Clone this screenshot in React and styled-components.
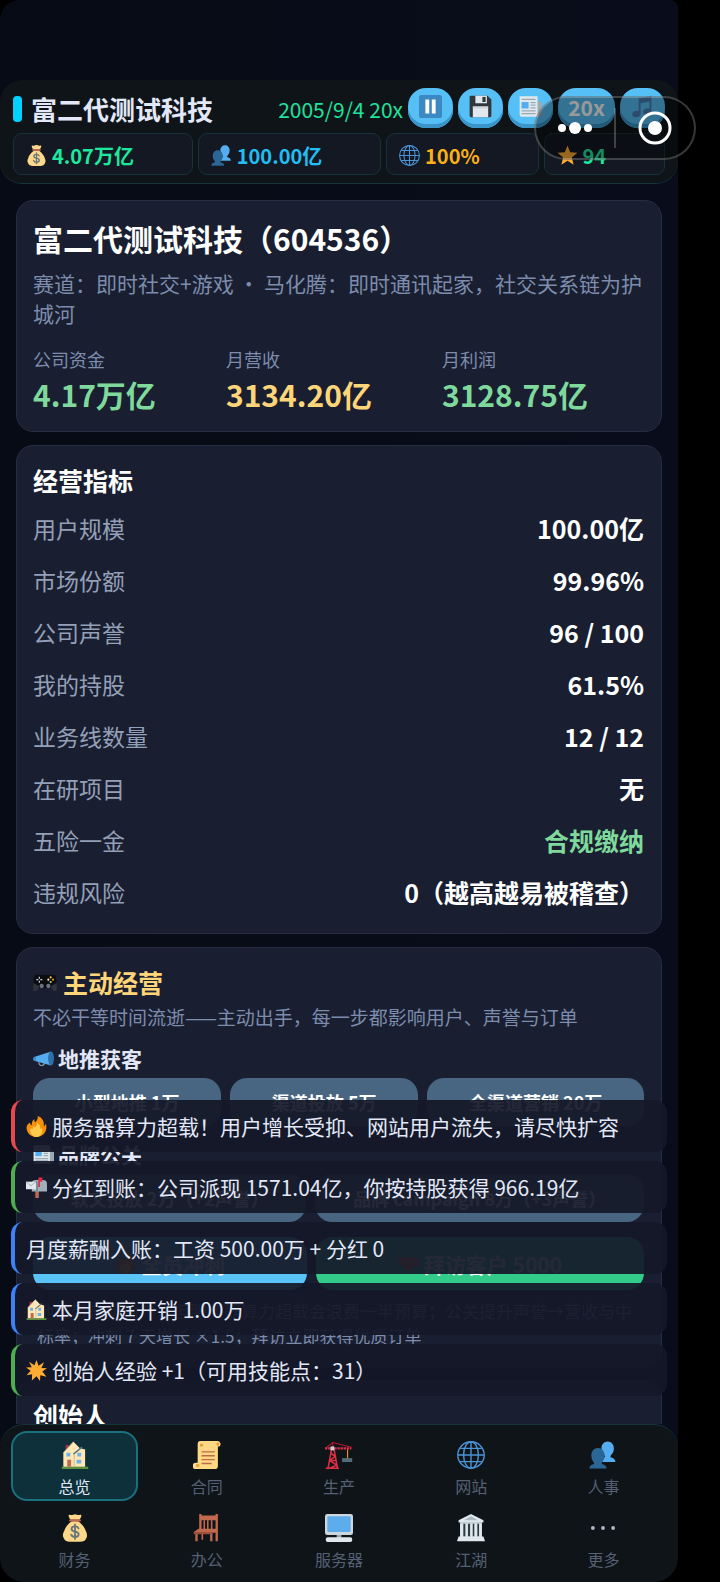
import React, { useState } from "react"
import styled, { createGlobalStyle, ThemeProvider } from "styled-components"

const theme = {
  white: "#ffffff",
  text: "#e2e8f8",
  muted: "#7d8cad",
  label: "#949fb8",
  green: "#7fd99c",
  yellow: "#ffd57a",
  card: "#191f30",
  cardBorder: "#262d40",
  bar: "#0f1418",
  teal: "#17323b",
}

const GlobalStyle = createGlobalStyle`
  * {
    box-sizing: border-box;
  }
  body {
    margin: 0;
    background: #000;
    font-family: "Noto Sans CJK SC", "Noto Sans", sans-serif;
  }
  button {
    font-family: inherit;
    border: none;
    padding: 0;
    cursor: pointer;
  }
  h1, h2, h3, p, dl, dd, ul {
    margin: 0;
    padding: 0;
  }
`

/* ---------- icons ---------- */

const drawings = {
  money: (
    <>
      <path fill="#fdd888" d="M31.9 21.7C30.5 17 25 11 21.800 9.400h-7.600C10.500 11 5.500 17 4.100 21.700 2.700 24 1.500 28 3.500 31c1.500 4 4.500 4.800 8 4.800h13c4 0 7-1 8.200-4.800 1.500-3.500.5-7-.8-9.300z" />
      <path fill="#fdd888" d="M12.500 7.500C11 5.500 9.500 3 9.800 1.500c.5-1.300 2.500-.2 3.800-.2C15 1.300 16.300.200 18 .200s3 1.100 4.400 1.100c1.300 0 3.300-1.100 3.800.200.3 1.500-1.200 4-2.700 6z" />
      <rect x="10.500" y="6.800" width="15" height="3" rx="1.500" fill="#bf6952" />
      <path fill="none" stroke="#67757f" strokeWidth="2.300" strokeLinecap="round" d="M22.500 18.500c-.8-1.700-2.500-2.500-4.500-2.500-2.500 0-4.500 1.300-4.500 3.300 0 4.700 9.200 2 9.200 6.700 0 2.200-2.200 3.500-4.700 3.500-2.300 0-4.200-1-4.900-3M18 13.500v18.500" />
    </>
  ),
  people: (
    <>
      <path fill="#55acee" d="M34 27c0-3.500-2.500-5-5.500-5.800-1-.3-1.300-2 0-3.200C30.500 16 32 13 32 9.500 32 4 28.500.500 24 .500S16 4 16 9.500c0 3.500 1.500 6.500 3.500 8.500 1.300 1.200 1 2.900 0 3.200C18 21.700 17 23 17 27z" />
      <path fill="#2a6797" d="M22.500 35.500c0-3-2-4.700-5.200-5.500-1.300-.3-1.300-1.700-.3-2.800C19 25 20 22 20 18.500 20 13 16.500 9 11.500 9S3 13 3 18.500C3 22 4 25 6 27.200c1 1.100 1 2.500-.3 2.800C2.500 30.800.500 32.500.500 35.500z" />
    </>
  ),
  globe: (
    <g fill="none" stroke="#4b93d6" strokeWidth="1.800">
      <circle cx="18" cy="18" r="17" />
      <ellipse cx="18" cy="18" rx="9.500" ry="17" />
      <path d="M18 1v34M1 18h34M4 9.500h28M4 26.500h28" />
    </g>
  ),
  star: (
    <path fill="#ffac33" d="M18 1l4.600 11.500L35 13.300l-9.600 8L28.500 34 18 27 7.500 34l3.100-12.700-9.600-8 12.400-.8z" />
  ),
  pause: (
    <>
      <rect width="36" height="36" rx="4" fill="#3b88c3" />
      <path fill="#fff" d="M10 7h6v22h-6zM20 7h6v22h-6z" />
    </>
  ),
  save: (
    <>
      <path fill="#31373d" d="M3 1h26l6 6v25a3 3 0 0 1-3 3H4a3 3 0 0 1-3-3V3a2 2 0 0 1 2-2z" />
      <path fill="#e1e8ed" d="M10 1h18v12H10zM6 18h24v17H6z" />
      <path fill="#31373d" d="M21 3h5v8h-5z" />
      <path fill="#ccd6dd" d="M6 18h24v3H6z" />
    </>
  ),
  news: (
    <>
      <path fill="#99aab5" d="M28 10h4.500a3.500 3.500 0 0 1 3.500 3.500V30a3 3 0 0 1-3 3H8z" />
      <path fill="#e1e8ed" d="M1 2h28v28a3 3 0 0 0 3 4H4a3 3 0 0 1-3-3z" />
      <path stroke="#99aab5" strokeWidth="2" d="M4 7h22M18 12h8M18 16h8M18 20h8M4 25h22M4 29h22" />
      <path fill="#55acee" d="M4 11h11v10H4z" />
    </>
  ),
  music: (
    <path fill="#4c7fb5" d="M32 1L12 5v20.300c-1-.5-2.300-.8-4-.5C4 25.500 1.500 28 2 31s3.500 4.500 7.500 3.700C13.500 34 15 32 15 29V13l14-3v11.300c-1-.5-2.300-.8-4-.5-4 .7-6.500 3.200-6 6.200s3.500 4.500 7.500 3.700C30.500 31 32 29 32 26z" />
  ),
  gamepad: (
    <>
      <path fill="#0b0d11" d="M5 7h26c3 0 4 5 4.500 12L31 27H5L.500 19C1 12 2 7 5 7z" />
      <path fill="#30353b" d="M.500 19L10 25l-5 6c-2 1-4 .5-4.500-1zM35.500 19L26 25l5 6c2 1 4 .5 4.500-1z" />
      <circle cx="13" cy="24" r="3.200" fill="#66757f" />
      <circle cx="23" cy="24" r="3.200" fill="#66757f" />
      <path stroke="#ccd6dd" strokeWidth="1.800" d="M9.500 10v3M9.500 16v3M5 14.500h3M11 14.500h3" />
      <circle cx="26.500" cy="11" r="1.600" fill="#ffcc4d" />
      <circle cx="26.500" cy="18" r="1.600" fill="#a6d388" />
      <circle cx="23" cy="14.500" r="1.600" fill="#ffe8b6" />
      <circle cx="30" cy="14.500" r="1.600" fill="#f4900c" />
    </>
  ),
  horn: (
    <>
      <path fill="none" stroke="#8899a6" strokeWidth="2" d="M10 23c0 4 1.500 7 5 7s4.500-2 5-5" />
      <path fill="#55acee" d="M31 6L2 15.500C0 17 0 20.500 2 22l29 8z" />
      <ellipse cx="31" cy="18" rx="5" ry="12" fill="#2d6fa8" />
      <path fill="#3b88c3" d="M2 15.500l3-1v8.300L2 22c-2-1.500-2-5 0-6.500z" />
    </>
  ),
  fire: (
    <>
      <path fill="#f4900c" d="M35 19c0-2-.4-4-1-6-.6 2.500-2 4-3.500 4.800C32 10 28 2.500 20 0c1 4-1 7-4 10.500-1.500-1-2-3-1.500-5.500-4 2.500-5 7-4.500 11C8 15.500 7 13.500 7.200 11 3 13 1 16.500 1 20c0 9 7.600 16 17 16s17-7 17-17z" />
      <path fill="#ffcc4d" d="M28 24c0-1.500-.3-2.800-1-4-.5 1.500-1.500 2-2.500 2.300.8-4-1.500-8.300-5.500-10.300.5 3-1 5-3 7.500-1 0-2-1-2-2.500-2.500 1.500-2.800 3.500-2.500 6-1.500-.3-2.500-1.500-2.500-2.500C7.500 21.500 7 23 7 25c0 6 5 11 11 11s10-6 10-12z" />
    </>
  ),
  mailbox: (
    <>
      <path fill="#bf6952" d="M16 22h6v14h-6z" />
      <path fill="#9fb0bb" d="M16 5h13a7 7 0 0 1 7 7v13H10V11a6 6 0 0 1 6-6z" />
      <path fill="#66757f" d="M20 25V12a6 6 0 0 0-8-6c5 0 6 3 6 7v12z" />
      <path fill="#e1e8ed" d="M0 8h17v13H0z" />
      <path fill="none" stroke="#99aab5" strokeWidth="1.500" d="M0 8l8.500 7L17 8" />
      <path fill="#dd2e44" d="M22 1h6v7h-4v9h-3V3z" />
    </>
  ),
  house: (
    <>
      <path fill="#5c913b" d="M1 33h34v3H1z" />
      <path fill="#a0304f" d="M6 5h4v8H6z" />
      <path fill="#ffe8b6" d="M3 15L16 1l8 8 7 2v22H3z" />
      <path fill="none" stroke="#66757f" strokeWidth="2" d="M16 17l11-9" />
      <path fill="none" stroke="#c9b48c" strokeWidth="1.200" d="M17 17v16M3 15L16 1" />
      <path fill="#6fb3e4" d="M7 15h5v5H7zM21 15h5v5h-5zM20 24h6v5h-6z" />
      <path fill="#c1694f" d="M8 24h5v9H8z" />
    </>
  ),
  shine: (
    <path fill="#ffac33" d="M18 0l3.500 10L31 4l-4.500 9.500L36 14l-8 5.500 7 9-10.500-2.500L24 36l-6-8-8 7 .5-10.500L1 26l7-7.500L0 13l10-.5L5 3l9.500 6z" />
  ),
  scroll: (
    <>
      <path fill="#ffd983" d="M9 0h23a4 4 0 0 1 2 7h-2v25a4 4 0 0 1-4 4H4a4 4 0 0 1-1-8h3V4c0-2 1-4 3-4z" />
      <path fill="#e39f3d" d="M9 4h4v3H9zM4 30h4v3H4z" />
      <path stroke="#c1694f" strokeWidth="1.800" d="M11 14h17M11 19h17M11 24h17M11 29h13" />
      <circle cx="32" cy="4" r="2" fill="#e39f3d" />
    </>
  ),
  crane: (
    <>
      <path fill="none" stroke="#dd2e44" strokeWidth="2" d="M4 35l4.500-25h3L16 35M7 15l6 5-7 5 9 6-9 4M6 25h9M1 35h17" />
      <path fill="none" stroke="#be1931" strokeWidth="1.300" d="M10 1v8M10 2l24 6M10 2L1 9" />
      <path fill="none" stroke="#dd2e44" strokeWidth="3" strokeDasharray="3 1" d="M0 9.500h34" />
      <path fill="#ccd6dd" d="M7 7h5v5H7z" />
      <path stroke="#f4900c" strokeWidth="1.500" d="M29 11v12" />
      <path fill="#546b78" d="M22 22h13v5H22z" />
    </>
  ),
  chair: (
    <>
      <path fill="#c1694f" d="M8 0h3v20H8zM29 0h3v35h-3zM8 2h24v6H8zM1 23l6-4h25v5H1zM3 24h3v11H3zM22 24h3v11h-3zM11 24h2v9h-2z" />
      <path stroke="#c1694f" strokeWidth="2" d="M14.500 8v12M19 8v12M24 8v12" />
      <path fill="#a0503a" d="M1 23h24v3H1z" />
    </>
  ),
  computer: (
    <>
      <path fill="#99aab5" d="M15 26h6v5h-6z" />
      <rect y="0" width="36" height="27" rx="3" fill="#ccd6dd" />
      <rect x="3" y="3" width="30" height="20" rx="1" fill="#5dadec" />
      <rect x="1" y="30" width="34" height="6" rx="2.500" fill="#e1e8ed" />
    </>
  ),
  temple: (
    <>
      <path fill="#9fb0bb" d="M4 10h28v20H4z" />
      <path fill="#2f3b44" d="M8 13h3v16H8zM14 13h3v16h-3zM20 13h2.500v16H20zM26 13h2.500v16H26z" />
      <path fill="#e1e8ed" d="M18 0l16 8v3H2V8zM4 12h4v17H4zM11 12h3v17h-3zM17 12h3v17h-3zM22.500 12h3.500v17h-3.500zM28.500 12h3.500v17h-3.500zM2 29h32l2 6H0z" />
      <path fill="#aab8c2" d="M18 3l9 5H9z" />
    </>
  ),
  more: (
    <g fill="#a9b4c4">
      <circle cx="5" cy="18" r="2.500" />
      <circle cx="18" cy="18" r="2.500" />
      <circle cx="31" cy="18" r="2.500" />
    </g>
  ),
  hands: (
    <path fill="#ef6a45" d="M0 9l8-2 8 2 5-2 7 1 8 2v12l-8 2-9 7c-3 0-9-5-12-9l-7-3z" />
  ),
}

const Svg = styled.svg`
  display: block;
  flex: none;
  width: ${({ $size }) => $size}px;
  height: ${({ $size }) => $size}px;
`

const Icon = ({ name, size = 21 }) => (
  <Svg $size={size} viewBox="0 0 36 36" aria-hidden="true">
    {drawings[name]}
  </Svg>
)

/* ---------- page frame ---------- */

const Page = styled.div`
  position: relative;
  display: flex;
  height: 100vh;
  padding-right: 42px;
  background: #000;
`
const Shell = styled.div`
  display: flex;
  flex-direction: column;
  flex: 1;
  min-width: 0;
  padding-top: 80px;
  overflow: hidden;
  border-radius: 20px 8px 24px 24px;
  background: linear-gradient(90deg, #070b15 0%, #090c1a 100%);
`
const Header = styled.header`
  display: flex;
  flex-direction: column;
  gap: 5px;
  padding: 8px 13px;
  border-radius: 22px;
  border-bottom: 1px solid ${({ theme }) => theme.teal};
  background: ${({ theme }) => theme.bar};
`
const TitleRow = styled.div`
  display: flex;
  align-items: center;
  gap: 5px;
  height: 40px;
`
const Brand = styled.h1`
  display: flex;
  align-items: center;
  gap: 9px;
  flex: 1;
  padding-top: 2px;
  font-size: 26px;
  line-height: 40px;
  font-weight: 700;
  white-space: nowrap;
  color: ${({ theme }) => theme.text};
  &::before {
    content: "";
    width: 9px;
    height: 26px;
    border-radius: 4px;
    background: #00d2ff;
  }
`
const Clock = styled.time`
  padding-top: 2px;
  font-size: 21px;
  white-space: nowrap;
  color: #1fe39c;
`
const PillButton = styled.button`
  display: flex;
  align-items: center;
  justify-content: center;
  width: ${({ $wide }) => ($wide ? 57 : 45)}px;
  height: 40px;
  padding-bottom: 3px;
  border-radius: 18px;
  font-size: 21px;
  font-weight: 700;
  color: #fff;
  background: #55bff6;
  box-shadow: inset 0 -4px 0 #3a95c9;
`
const Stats = styled.div`
  display: flex;
  gap: 5px;
`
const Stat = styled.div`
  display: flex;
  align-items: center;
  gap: 5px;
  flex: 1 1 auto;
  height: 42px;
  padding: 2px 12px 0;
  border: 1px solid ${({ theme }) => theme.teal};
  border-radius: 9px;
  background: #131822;
  font-size: 20px;
  font-weight: 700;
  color: ${({ $color }) => $color};
`

const Capsule = styled.div`
  position: absolute;
  top: 96px;
  right: 24px;
  display: flex;
  align-items: center;
  width: 162px;
  height: 64px;
  border: 2px solid rgba(255, 255, 255, 0.22);
  border-radius: 32px;
  background: rgba(0, 0, 0, 0.4);
`
const CapsuleButton = styled.button`
  display: flex;
  align-items: center;
  justify-content: center;
  flex: 1;
  height: 40px;
  background: none;
  & + & {
    border-left: 2px solid rgba(255, 255, 255, 0.22);
  }
`

/* ---------- cards ---------- */

const Content = styled.div`
  position: relative;
  flex: 1;
  min-height: 0;
`
const Main = styled.main`
  display: flex;
  flex-direction: column;
  gap: 13px;
  height: 100%;
  padding: 16px 16px 0;
  overflow: hidden;
`
const Card = styled.section`
  flex: none;
  padding: 17px 17px 15px 16px;
  border: 1px solid ${({ theme }) => theme.cardBorder};
  border-radius: 17px;
  background: ${({ theme }) => theme.card};
`
const CompanyName = styled.h2`
  font-size: 30px;
  line-height: 40px;
  font-weight: 700;
  color: ${({ theme }) => theme.white};
`
const CompanyInfo = styled.p`
  margin: 10px 0 18px;
  font-size: 21px;
  line-height: 30px;
  color: ${({ theme }) => theme.muted};
`
const Figures = styled.dl`
  display: grid;
  grid-template-columns: auto auto auto;
  column-gap: 14px;
`
const FigureLabel = styled.dt`
  font-size: 18px;
  line-height: 26px;
  color: ${({ theme }) => theme.muted};
`
const FigureValue = styled.dd`
  font-size: 30px;
  line-height: 44px;
  font-weight: 700;
  color: ${({ $color }) => $color};
`
const CardTitle = styled.h2`
  display: flex;
  align-items: center;
  gap: 6px;
  margin-bottom: 5px;
  font-size: 25px;
  line-height: 34px;
  font-weight: 700;
  color: ${({ theme, $accent }) => ($accent ? theme.yellow : theme.white)};
`
const MetricRow = styled.div`
  display: flex;
  justify-content: space-between;
  padding: 8px 0;
  line-height: 36px;
`
const MetricLabel = styled.dt`
  font-size: 23px;
  color: ${({ theme }) => theme.label};
`
const MetricValue = styled.dd`
  font-size: 25px;
  font-weight: 700;
  color: ${({ theme, $good }) => ($good ? theme.green : theme.white)};
`
const Intro = styled.p`
  font-size: 19px;
  line-height: 26px;
  color: ${({ theme }) => theme.muted};
`
const GroupTitle = styled.h3`
  display: flex;
  align-items: center;
  gap: 4px;
  margin: 13px 0 5px;
  font-size: 21px;
  line-height: 30px;
  font-weight: 700;
  color: ${({ theme }) => theme.text};
`
const Actions = styled.div`
  display: flex;
  gap: 9px;
  margin-top: ${({ $spaced }) => ($spaced ? 15 : 0)}px;
`
const ActionButton = styled.button`
  display: flex;
  align-items: center;
  justify-content: center;
  gap: 5px;
  flex: 1 1 auto;
  height: ${({ $large }) => ($large ? 53 : 48)}px;
  border-radius: 17px;
  font-size: ${({ $large }) => ($large ? 21 : 18)}px;
  font-weight: 700;
  white-space: nowrap;
  color: #fff;
  background: ${({ $green }) => ($green ? "#33cb8a" : "#5ac3f7")};
  &:disabled {
    background: #486681;
  }
`
const Hint = styled.p`
  padding: 8px 4px 3px;
  font-size: 17px;
  line-height: 25px;
  color: ${({ theme }) => theme.muted};
`

/* ---------- toasts ---------- */

const ToastStack = styled.ul`
  position: absolute;
  left: 11px;
  right: 11px;
  bottom: 28px;
  display: flex;
  flex-direction: column;
  gap: 9px;
  list-style: none;
`
const Toast = styled.li`
  display: flex;
  align-items: center;
  gap: 5px;
  height: 52px;
  padding: 0 11px;
  border-left: 4px solid ${({ $color }) => $color};
  border-radius: 12px;
  background: rgba(20, 24, 40, 0.93);
  font-size: 21px;
  white-space: nowrap;
  color: ${({ theme }) => theme.text};
`

/* ---------- tab bar ---------- */

const TabBar = styled.nav`
  display: grid;
  grid-template-columns: repeat(5, 1fr);
  gap: 3px 5px;
  padding: 6px 11px 8px;
  border-top: 1px solid ${({ theme }) => theme.teal};
  border-radius: 24px;
  background: ${({ theme }) => theme.bar};
`
const Tab = styled.button`
  display: flex;
  flex-direction: column;
  align-items: center;
  gap: 5px;
  height: 70px;
  padding-top: 8px;
  border: 2px solid ${({ $active }) => ($active ? "#1b707d" : "transparent")};
  border-radius: 16px;
  background: ${({ $active }) => ($active ? "#0e303b" : "transparent")};
  font-size: 16px;
  line-height: 24px;
  color: ${({ $active }) => ($active ? "#dfe9f5" : "#566074")};
`

const metrics = [
  ["用户规模", "100.00亿"],
  ["市场份额", "99.96%"],
  ["公司声誉", "96 / 100"],
  ["我的持股", "61.5%"],
  ["业务线数量", "12 / 12"],
  ["在研项目", "无"],
  ["五险一金", "合规缴纳", true],
  ["违规风险", "0（越高越易被稽查）"],
]

const stats = [
  { icon: "money", value: "4.07万亿", color: "#1ee8a0" },
  { icon: "people", value: "100.00亿", color: "#22bdf2" },
  { icon: "globe", value: "100%", color: "#fbb116" },
  { icon: "star", value: "94", color: "#1ee8a0" },
]

const toasts = [
  { icon: "fire", color: "#e5484d", text: "服务器算力超载！用户增长受抑、网站用户流失，请尽快扩容" },
  { icon: "mailbox", color: "#4caf50", text: "分红到账：公司派现 1571.04亿，你按持股获得 966.19亿" },
  { color: "#3b82f6", text: "月度薪酬入账：工资 500.00万 + 分红 0" },
  { icon: "house", color: "#3b82f6", text: "本月家庭开销 1.00万" },
  { icon: "shine", color: "#4caf50", text: "创始人经验 +1（可用技能点：31）" },
]

const tabs = [
  ["house", "总览"],
  ["scroll", "合同"],
  ["crane", "生产"],
  ["globe", "网站"],
  ["people", "人事"],
  ["money", "财务"],
  ["chair", "办公"],
  ["computer", "服务器"],
  ["temple", "江湖"],
  ["more", "更多"],
]

const App = () => {
  const [active, setActive] = useState("总览")

  return (
    <ThemeProvider theme={theme}>
      <GlobalStyle />
      <Page>
        <Shell>
          <Header>
            <TitleRow>
              <Brand>富二代测试科技</Brand>
              <Clock>2005/9/4 20x</Clock>
              <PillButton aria-label="暂停"><Icon name="pause" size={23} /></PillButton>
              <PillButton aria-label="保存"><Icon name="save" size={23} /></PillButton>
              <PillButton aria-label="新闻"><Icon name="news" size={23} /></PillButton>
              <PillButton $wide>20x</PillButton>
              <PillButton aria-label="音乐"><Icon name="music" size={23} /></PillButton>
            </TitleRow>
            <Stats>
              {stats.map(({ icon, value, color }) => (
                <Stat key={icon} $color={color}>
                  <Icon name={icon} />
                  {value}
                </Stat>
              ))}
            </Stats>
          </Header>

          <Content>
            <Main>
              <Card>
                <CompanyName>富二代测试科技（604536）</CompanyName>
                <CompanyInfo>
                  赛道：即时社交+游戏 ・ 马化腾：即时通讯起家，社交关系链为护城河
                </CompanyInfo>
                <Figures>
                  <div>
                    <FigureLabel>公司资金</FigureLabel>
                    <FigureValue $color={theme.green}>4.17万亿</FigureValue>
                  </div>
                  <div>
                    <FigureLabel>月营收</FigureLabel>
                    <FigureValue $color={theme.yellow}>3134.20亿</FigureValue>
                  </div>
                  <div>
                    <FigureLabel>月利润</FigureLabel>
                    <FigureValue $color={theme.green}>3128.75亿</FigureValue>
                  </div>
                </Figures>
              </Card>

              <Card>
                <CardTitle>经营指标</CardTitle>
                <dl>
                  {metrics.map(([label, value, good]) => (
                    <MetricRow key={label}>
                      <MetricLabel>{label}</MetricLabel>
                      <MetricValue $good={good}>{value}</MetricValue>
                    </MetricRow>
                  ))}
                </dl>
              </Card>

              <Card>
                <CardTitle $accent>
                  <Icon name="gamepad" size={24} />
                  主动经营
                </CardTitle>
                <Intro>不必干等时间流逝——主动出手，每一步都影响用户、声誉与订单</Intro>
                <GroupTitle>
                  <Icon name="horn" />
                  地推获客
                </GroupTitle>
                <Actions>
                  <ActionButton disabled>小型地推 1万</ActionButton>
                  <ActionButton disabled>渠道投放 5万</ActionButton>
                  <ActionButton disabled>全渠道营销 20万</ActionButton>
                </Actions>
                <GroupTitle>
                  <Icon name="news" />
                  品牌公关
                </GroupTitle>
                <Actions>
                  <ActionButton disabled>软文投放 2万（+2声誉）</ActionButton>
                  <ActionButton disabled>品牌 campaign 8万（+3声誉）</ActionButton>
                </Actions>
                <Actions $spaced>
                  <ActionButton $large>
                    <Icon name="fire" />
                    全员冲刺
                  </ActionButton>
                  <ActionButton $large $green>
                    <Icon name="hands" />
                    拜访客户 5000
                  </ActionButton>
                </Actions>
                <Hint>
                  地推带来新用户，但服务器算力超载会浪费一半预算；公关提升声誉→营收与中标率；冲刺 7 天增长 ×1.5；拜访立即获得优质订单
                </Hint>
              </Card>

              <Card>
                <CardTitle>创始人</CardTitle>
              </Card>
            </Main>

            <ToastStack>
              {toasts.map(({ icon, color, text }) => (
                <Toast key={text} $color={color}>
                  {icon && <Icon name={icon} />}
                  {text}
                </Toast>
              ))}
            </ToastStack>
          </Content>

          <TabBar>
            {tabs.map(([icon, label]) => (
              <Tab key={label} $active={label === active} onClick={() => setActive(label)}>
                <Icon name={icon} size={28} />
                {label}
              </Tab>
            ))}
          </TabBar>
        </Shell>

        <Capsule>
          <CapsuleButton aria-label="菜单">
            <svg width="36" height="14" viewBox="0 0 36 14" fill="#fff">
              <circle cx="5" cy="7" r="4" />
              <circle cx="18" cy="7" r="6" />
              <circle cx="31" cy="7" r="4" />
            </svg>
          </CapsuleButton>
          <CapsuleButton aria-label="关闭">
            <svg width="34" height="34" viewBox="0 0 34 34">
              <circle cx="17" cy="17" r="15" fill="none" stroke="#fff" strokeWidth="3" />
              <circle cx="17" cy="17" r="7" fill="#fff" />
            </svg>
          </CapsuleButton>
        </Capsule>
      </Page>
    </ThemeProvider>
  )
}

export default App
